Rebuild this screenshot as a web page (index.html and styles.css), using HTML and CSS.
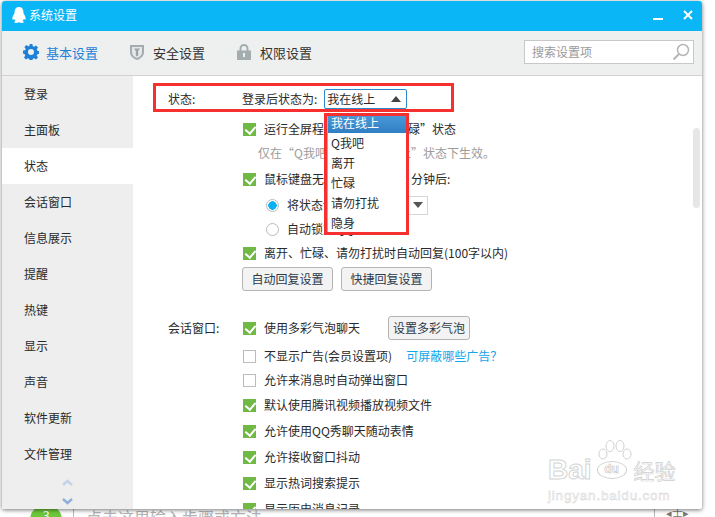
FILE: index.html
```html
<!DOCTYPE html>
<html lang="zh">
<head>
<meta charset="utf-8">
<title>系统设置</title>
<link rel="stylesheet" href="styles.css">
</head>
<body>
<div class="page">
  <div class="behind">
    <span class="step-num">3</span>
    <span class="step-line"></span>
    <span class="step-text">点击这里输入步骤或方法</span>
    <span class="step-line far"></span>
    <span class="step-tool">◂士▸</span>
  </div>
  <main class="window">
    <header class="titlebar">
      <svg class="penguin" width="16" height="18" viewBox="0 0 16 18"><path fill="#fff" d="M8 1C5 1 3.6 3.3 3.6 6c0 1-.2 1.500-.8 2.500C1.800 10.200 1 12 1.500 13.500c.3.600 1 0 1.600-.8.300 1 .8 1.800 1.500 2.400C3.500 15.500 3 16 3.300 16.500c.5.700 3 .5 4.700-.2 1.700.7 4.200.9 4.700.2.300-.5-.2-1-1.300-1.400.7-.6 1.200-1.400 1.500-2.400.6.800 1.300 1.400 1.600.8.500-1.500-.3-3.300-1.300-5C12.600 7.500 12.400 7 12.400 6 12.400 3.300 11 1 8 1z"/></svg>
      <span class="title">系统设置</span>
      <span class="spacer"></span>
      <span class="minimize"></span>
      <svg class="close" width="10" height="10" viewBox="0 0 10 10"><path d="M1 1l8 8M9 1l-8 8" stroke="#fff" stroke-width="2"/></svg>
    </header>
    <nav class="toolbar">
      <a class="tab active">
        <svg width="16" height="16" viewBox="0 0 16 16"><path fill="#1f80d8" fill-rule="evenodd" d="M6.600 0h2.800l.4 2.200 1.300.6 1.900-1.300 2 2-1.300 1.900.6 1.300 2.200.4v2.800l-2.200.4-.6 1.300 1.300 1.900-2 2-1.900-1.300-1.300.6-.4 2.200H6.600l-.4-2.200-1.300-.6-1.900 1.300-2-2 1.300-1.900-.6-1.300L-.1 9.400V6.600l2.200-.4.6-1.300-1.300-1.900 2-2 1.900 1.300 1.300-.6zM8 5a3 3 0 1 0 0 6 3 3 0 0 0 0-6z"/></svg>
        基本设置
      </a>
      <a class="tab">
        <svg width="14" height="16" viewBox="0 0 14 16"><path fill="#a3adb0" d="M0 1h14v7c0 4-3 6.500-7 8-4-1.500-7-4-7-8z"/><path fill="#e6e9e9" d="M2 3h10v5c0 3-2 4.800-5 6-3-1.200-5-3-5-6z"/><path fill="#9aa5a8" d="M4 4.500h6L8.200 7v4.500L7 12.500 5.800 11.500V7z"/></svg>
        安全设置
      </a>
      <a class="tab">
        <svg width="14" height="16" viewBox="0 0 14 16"><path fill="none" stroke="#a3adb0" stroke-width="2" d="M3.500 7V4.500a3.500 3.500 0 0 1 7 0V7"/><path fill="#a3adb0" d="M0 6.500h14V16H0z"/><path fill="#eef0f0" d="M6 9h2v4H6z"/></svg>
        权限设置
      </a>
      <span class="spacer"></span>
      <div class="search">
        <span class="search-hint">搜索设置项</span>
        <svg width="18" height="18" viewBox="0 0 18 18"><circle cx="11" cy="7" r="5.500" fill="none" stroke="#b5b5b5" stroke-width="1.500"/><path d="M7 11l-5.500 5.500" stroke="#b5b5b5" stroke-width="2"/></svg>
      </div>
    </nav>
    <div class="body">
      <aside class="sidebar">
        <a class="side-item">登录</a>
        <a class="side-item">主面板</a>
        <a class="side-item selected">状态</a>
        <a class="side-item">会话窗口</a>
        <a class="side-item">信息展示</a>
        <a class="side-item">提醒</a>
        <a class="side-item">热键</a>
        <a class="side-item">显示</a>
        <a class="side-item">声音</a>
        <a class="side-item">软件更新</a>
        <a class="side-item">文件管理</a>
        <div class="side-arrows">
          <svg width="11" height="7" viewBox="0 0 11 7"><path d="M1 6l4.500-4 4.500 4" fill="none" stroke="#c4d3e8" stroke-width="2.500"/></svg>
          <svg width="11" height="7" viewBox="0 0 11 7"><path d="M1 1l4.500 4 4.500-4" fill="none" stroke="#8fb0d8" stroke-width="2.500"/></svg>
        </div>
      </aside>
      <section class="content">
        <div class="group">
          <div class="label label-first">状态:</div>
          <div class="opts">
            <div class="status-row">
              <span>登录后状态为:</span>
              <div class="select">
                <span>我在线上</span>
                <span class="tri-up"></span>
              </div>
            </div>
            <div class="row first"><span class="check on"></span>运行全屏程序时切换到“忙碌”状态</div>
            <div class="row hint">仅在“Q我吧”或“我在线上”状态下生效。</div>
            <div class="row gap"><span class="check on"></span>鼠标键盘无操作超过<span class="minutes">5</span>分钟后:</div>
            <div class="row gap sub"><span class="radio on"></span>将状态切换为<span class="combo"><span class="tri-down"></span></span></div>
            <div class="row sub"><span class="radio"></span>自动锁定QQ</div>
            <div class="row"><span class="check on"></span>离开、忙碌、请勿打扰时自动回复(100字以内)</div>
            <div class="row buttons">
              <button class="btn">自动回复设置</button>
              <button class="btn">快捷回复设置</button>
            </div>
          </div>
        </div>
        <div class="group second">
          <div class="label">会话窗口:</div>
          <div class="opts">
            <div class="row"><span class="check on"></span>使用多彩气泡聊天<button class="btn bubble">设置多彩气泡</button></div>
            <div class="row wide"><span class="check"></span>不显示广告(会员设置项)<a class="link">可屏蔽哪些广告？</a></div>
            <div class="row"><span class="check"></span>允许来消息时自动弹出窗口</div>
            <div class="row tiny"><span class="check on"></span>默认使用腾讯视频播放视频文件</div>
            <div class="row gap"><span class="check on"></span>允许使用QQ秀聊天随动表情</div>
            <div class="row gap"><span class="check on"></span>允许接收窗口抖动</div>
            <div class="row gap"><span class="check on"></span>显示热词搜索提示</div>
            <div class="row gap"><span class="check on"></span>显示历史消息记录</div>
          </div>
        </div>
        <div class="scrollbar"></div>
      </section>
    </div>
    <div class="dropdown">
      <div class="drop-item current">我在线上</div>
      <div class="drop-item">Q我吧</div>
      <div class="drop-item">离开</div>
      <div class="drop-item">忙碌</div>
      <div class="drop-item">请勿打扰</div>
      <div class="drop-item">隐身</div>
    </div>
    <div class="mark mark-row"></div>
    <div class="mark mark-list"></div>
    <div class="watermark">
      <svg class="paw" width="34" height="22" viewBox="0 0 34 22"><g fill="none" stroke="#d2d2d2" stroke-width="1"><ellipse cx="5" cy="14" rx="4" ry="5"/><ellipse cx="12" cy="6" rx="4" ry="5.500"/><ellipse cx="22" cy="6" rx="4" ry="5.500"/><ellipse cx="29" cy="14" rx="4" ry="5"/></g></svg>
      <div class="wm-main"><span class="wm-bai">Bai</span><span class="wm-du">du</span><span class="wm-cn">经验</span></div>
      <div class="wm-url">jingyan.baidu.com</div>
    </div>
  </main>
</div>
</body>
</html>
```
FILE: styles.css
```css
* { box-sizing: border-box; }
html, body { margin: 0; height: 100%; overflow: hidden; background: #fff; }
body { font: 12px/1 "Noto Sans CJK SC", "Liberation Sans", sans-serif; color: #2a2a2a; }
.page { position: relative; width: 715px; height: 517px; padding: 1px 13px 0 2px; }
.behind { position: absolute; left: 0; right: 0; bottom: 0; height: 12px; overflow: hidden; color: #b4b4b4; }
.step-num { position: absolute; left: 30px; top: -1px; width: 32px; height: 32px; border-radius: 50%; background: #6cc83a; color: #fff; font-size: 13px; line-height: 24px; text-align: center; }
.step-line { position: absolute; left: 73px; top: 0; width: 1px; height: 12px; background: #bbb; }
.step-line.far { left: 654px; }
.step-text { position: absolute; left: 86px; top: 0; font-size: 16px; line-height: 24px; }
.step-tool { position: absolute; left: 666px; top: 1px; font-size: 11px; line-height: 12px; color: #777; }
.window { position: relative; width: 700px; height: 508px; display: flex; flex-direction: column; background: #fff; border-radius: 3px 3px 2px 2px; box-shadow: 0 1px 4px rgba(0,0,0,.55); }
.titlebar { height: 30px; flex: none; display: flex; align-items: center; padding: 0 9px 2px 9px; background: #0bb6f7; border-radius: 3px 3px 0 0; color: #fff; }
.penguin { margin: 0 2px 0 0; }
.title { font-size: 12px; }
.spacer { flex: 1; }
.minimize { width: 10px; height: 2px; background: #fff; margin: 8px 20px 0 0; }
.close { margin-top: 0; }
.toolbar { height: 45px; flex: none; display: flex; align-items: center; padding: 0 8px 2px 21px; background: #eef0f0; border-bottom: 1px solid #d2d2d2; }
.tab { display: flex; align-items: center; gap: 9px; width: 107px; font-size: 13px; color: #333; }
.tab.active { gap: 7px; color: #1f80d8; }
.search { width: 170px; height: 24px; display: flex; align-items: center; justify-content: space-between; padding: 0 3px 0 7px; background: #fff; border: 1px solid #c8c8c8; }
.search-hint { color: #9a9a9a; }
.body { flex: 1; min-height: 0; display: flex; }
.sidebar { width: 131px; flex: none; background: #eee; display: flex; flex-direction: column; }
.side-item { height: 36px; flex: none; padding-left: 22px; line-height: 36px; }
.side-item.selected { background: #fff; }
.side-arrows { display: flex; flex-direction: column; align-items: flex-end; gap: 12px; padding: 7px 60px 0 0; }
.content { position: relative; flex: 1; overflow: hidden; padding: 13px 0 0 35px; }
.group { display: flex; }
.group.second { margin-top: 25px; }
.label { width: 75px; flex: none; line-height: 24px; }
.label-first { line-height: 20px; }
.opts { flex: 1; }
.status-row { height: 20px; display: flex; align-items: center; gap: 7px; margin-left: -1px; }
.select { width: 83px; height: 20px; display: flex; align-items: center; justify-content: space-between; padding: 0 5px 0 2px; background: #fff; border: 1px solid #2f86c9; border-radius: 2px; }
.tri-up { width: 0; height: 0; border: 5px solid transparent; border-top: 0; border-bottom: 6px solid #444; }
.tri-down { width: 0; height: 0; border: 5px solid transparent; border-bottom: 0; border-top: 6px solid #555; }
.row { height: 24px; display: flex; align-items: center; white-space: nowrap; }
.row.first { margin-top: 8px; }
.row.gap { margin-top: 2px; }
.row.tiny { margin-top: 1px; }
.row.wide { margin-top: 4px; }
.row.hint { padding-left: 15px; color: #9c9c9c; }
.row.sub { padding-left: 23px; }
.check { position: relative; width: 13px; height: 13px; flex: none; margin-right: 8px; background: #fff; border: 1px solid #bcbcbc; }
.check.on { background: #6fb944; border-color: #6fb944; }
.check.on::after { content: ""; position: absolute; left: 3px; top: 0; width: 5px; height: 8px; border: solid #fff; border-width: 0 2px 2px 0; transform: rotate(40deg); }
.radio { width: 13px; height: 13px; flex: none; margin-right: 8px; background: #fff; border: 1px solid #bcbcbc; border-radius: 50%; }
.radio.on { background: radial-gradient(circle, #0bb0f5 0 4px, #fff 4.500px); }
.minutes { width: 39px; }
.combo { width: 64px; height: 19px; margin-left: 5px; display: flex; align-items: center; justify-content: flex-end; padding-right: 4px; background: #fff; border: 1px solid #d6d6d6; }
.buttons { gap: 8px; margin: 2px 0 0 -1px; }
.btn { height: 24px; width: 91px; padding: 0; font: inherit; color: #2a3a4a; background: #f3f3f3; border: 1px solid #b4b4b4; border-radius: 3px; }
.btn.bubble { width: 82px; margin-left: 28px; }
.link { margin-left: 14px; color: #12a5ea; }
.scrollbar { position: absolute; left: 560px; top: 52px; width: 7px; height: 80px; background: #e6e6e6; border-radius: 4px; }
.dropdown { position: absolute; left: 325px; top: 113px; width: 80px; height: 120px; background: #fff; border: 1px solid #8db4dc; }
.drop-item { height: 20px; line-height: 20px; padding-left: 3px; }
.drop-item.current { height: 18px; line-height: 16px; color: #fff; background: linear-gradient(#4b9ad8, #2f7fc4); }
.mark { position: absolute; border: 3px solid #f5302e; pointer-events: none; }
.mark-row { left: 151px; top: 82px; width: 301px; height: 29px; }
.mark-list { left: 322px; top: 112px; width: 85px; height: 122px; }
.watermark { position: absolute; left: 546px; top: 439px; width: 134px; }
.paw { display: block; margin-left: 50px; margin-bottom: -4px; }
.wm-main { display: flex; align-items: center; height: 24px; }
.wm-bai { font: bold 28px/24px "Liberation Sans", sans-serif; color: #fff; -webkit-text-stroke: 1px #d4d4d4; }
.wm-du { width: 30px; height: 18px; margin: 0 7px 0 5px; border: 1px solid #cfcfcf; border-radius: 50%; font: bold 12px/15px "Liberation Sans", sans-serif; text-align: center; color: #fff; -webkit-text-stroke: .6px #c4c4c4; }
.wm-cn { font-size: 21px; line-height: 24px; color: #fff; -webkit-text-stroke: .7px #cecece; }
.wm-url { margin-top: 7px; font: 13.500px/14px "Liberation Sans", sans-serif; letter-spacing: .8px; color: #fff; -webkit-text-stroke: .5px #d4d4d4; }
```
